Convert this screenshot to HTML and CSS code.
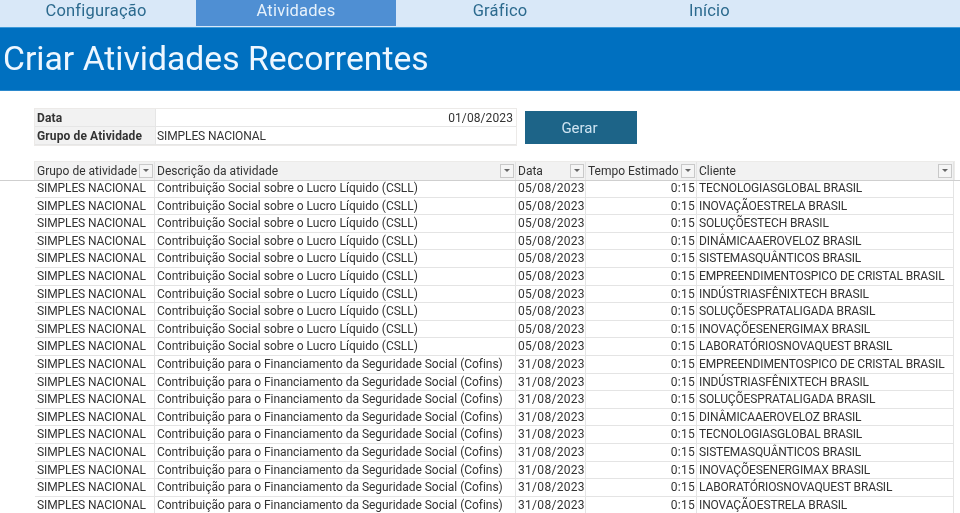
FILE: index.html
```html
<!DOCTYPE html>
<html lang="pt-BR">
<head>
<meta charset="utf-8">
<title>Criar Atividades Recorrentes</title>
<link rel="stylesheet" href="styles.css">
</head>
<body>
<nav class="tabs">
  <div class="tab">Configuração</div>
  <div class="tab active">Atividades</div>
  <div class="tab">Gráfico</div>
  <div class="tab">Início</div>
</nav>
<header class="banner"><h1>Criar Atividades Recorrentes</h1></header>
<section class="form-area">
  <div class="form">
    <div class="label">Data</div><div class="value right">01/08/2023</div>
    <div class="label">Grupo de Atividade</div><div class="value name">SIMPLES NACIONAL</div>
  </div>
  <button class="gerar">Gerar</button>
</section>
<section class="sheet">
  <div class="head row">
    <div class="hc">Grupo de atividade<span class="filter"></span></div>
    <div class="hc">Descrição da atividade<span class="filter"></span></div>
    <div class="hc">Data<span class="filter"></span></div>
    <div class="hc">Tempo Estimado<span class="filter"></span></div>
    <div class="hc">Cliente<span class="filter"></span></div>
  </div>
  <div class="row"><div class="c name">SIMPLES NACIONAL</div><div class="c">Contribuição Social sobre o Lucro Líquido (CSLL)</div><div class="c date">05/08/2023</div><div class="c time">0:15</div><div class="c client">TECNOLOGIASGLOBAL BRASIL</div></div>
  <div class="row"><div class="c name">SIMPLES NACIONAL</div><div class="c">Contribuição Social sobre o Lucro Líquido (CSLL)</div><div class="c date">05/08/2023</div><div class="c time">0:15</div><div class="c client">INOVAÇÃOESTRELA BRASIL</div></div>
  <div class="row"><div class="c name">SIMPLES NACIONAL</div><div class="c">Contribuição Social sobre o Lucro Líquido (CSLL)</div><div class="c date">05/08/2023</div><div class="c time">0:15</div><div class="c client">SOLUÇÕESTECH BRASIL</div></div>
  <div class="row"><div class="c name">SIMPLES NACIONAL</div><div class="c">Contribuição Social sobre o Lucro Líquido (CSLL)</div><div class="c date">05/08/2023</div><div class="c time">0:15</div><div class="c client">DINÂMICAAEROVELOZ BRASIL</div></div>
  <div class="row"><div class="c name">SIMPLES NACIONAL</div><div class="c">Contribuição Social sobre o Lucro Líquido (CSLL)</div><div class="c date">05/08/2023</div><div class="c time">0:15</div><div class="c client">SISTEMASQUÂNTICOS BRASIL</div></div>
  <div class="row"><div class="c name">SIMPLES NACIONAL</div><div class="c">Contribuição Social sobre o Lucro Líquido (CSLL)</div><div class="c date">05/08/2023</div><div class="c time">0:15</div><div class="c client">EMPREENDIMENTOSPICO DE CRISTAL BRASIL</div></div>
  <div class="row"><div class="c name">SIMPLES NACIONAL</div><div class="c">Contribuição Social sobre o Lucro Líquido (CSLL)</div><div class="c date">05/08/2023</div><div class="c time">0:15</div><div class="c client">INDÚSTRIASFÊNIXTECH BRASIL</div></div>
  <div class="row"><div class="c name">SIMPLES NACIONAL</div><div class="c">Contribuição Social sobre o Lucro Líquido (CSLL)</div><div class="c date">05/08/2023</div><div class="c time">0:15</div><div class="c client">SOLUÇÕESPRATALIGADA BRASIL</div></div>
  <div class="row"><div class="c name">SIMPLES NACIONAL</div><div class="c">Contribuição Social sobre o Lucro Líquido (CSLL)</div><div class="c date">05/08/2023</div><div class="c time">0:15</div><div class="c client">INOVAÇÕESENERGIMAX BRASIL</div></div>
  <div class="row"><div class="c name">SIMPLES NACIONAL</div><div class="c">Contribuição Social sobre o Lucro Líquido (CSLL)</div><div class="c date">05/08/2023</div><div class="c time">0:15</div><div class="c client">LABORATÓRIOSNOVAQUEST BRASIL</div></div>
  <div class="row"><div class="c name">SIMPLES NACIONAL</div><div class="c desc">Contribuição para o Financiamento da Seguridade Social (Cofins)</div><div class="c date">31/08/2023</div><div class="c time">0:15</div><div class="c client">EMPREENDIMENTOSPICO DE CRISTAL BRASIL</div></div>
  <div class="row"><div class="c name">SIMPLES NACIONAL</div><div class="c desc">Contribuição para o Financiamento da Seguridade Social (Cofins)</div><div class="c date">31/08/2023</div><div class="c time">0:15</div><div class="c client">INDÚSTRIASFÊNIXTECH BRASIL</div></div>
  <div class="row"><div class="c name">SIMPLES NACIONAL</div><div class="c desc">Contribuição para o Financiamento da Seguridade Social (Cofins)</div><div class="c date">31/08/2023</div><div class="c time">0:15</div><div class="c client">SOLUÇÕESPRATALIGADA BRASIL</div></div>
  <div class="row"><div class="c name">SIMPLES NACIONAL</div><div class="c desc">Contribuição para o Financiamento da Seguridade Social (Cofins)</div><div class="c date">31/08/2023</div><div class="c time">0:15</div><div class="c client">DINÂMICAAEROVELOZ BRASIL</div></div>
  <div class="row"><div class="c name">SIMPLES NACIONAL</div><div class="c desc">Contribuição para o Financiamento da Seguridade Social (Cofins)</div><div class="c date">31/08/2023</div><div class="c time">0:15</div><div class="c client">TECNOLOGIASGLOBAL BRASIL</div></div>
  <div class="row"><div class="c name">SIMPLES NACIONAL</div><div class="c desc">Contribuição para o Financiamento da Seguridade Social (Cofins)</div><div class="c date">31/08/2023</div><div class="c time">0:15</div><div class="c client">SISTEMASQUÂNTICOS BRASIL</div></div>
  <div class="row"><div class="c name">SIMPLES NACIONAL</div><div class="c desc">Contribuição para o Financiamento da Seguridade Social (Cofins)</div><div class="c date">31/08/2023</div><div class="c time">0:15</div><div class="c client">INOVAÇÕESENERGIMAX BRASIL</div></div>
  <div class="row"><div class="c name">SIMPLES NACIONAL</div><div class="c desc">Contribuição para o Financiamento da Seguridade Social (Cofins)</div><div class="c date">31/08/2023</div><div class="c time">0:15</div><div class="c client">LABORATÓRIOSNOVAQUEST BRASIL</div></div>
  <div class="row"><div class="c name">SIMPLES NACIONAL</div><div class="c desc">Contribuição para o Financiamento da Seguridade Social (Cofins)</div><div class="c date">31/08/2023</div><div class="c time">0:15</div><div class="c client">INOVAÇÃOESTRELA BRASIL</div></div>
</section>
</body>
</html>
```
FILE: styles.css
```css
* { box-sizing: border-box; }
html, body { margin: 0; padding: 0; height: 513px; overflow: hidden; background: #fff; }
body { font-family: Roboto, "Liberation Sans", sans-serif; color: #333; filter: blur(0.35px); }

.tabs { display: grid; grid-template-columns: 196px 200px 208px 356px; height: 27px; background: #d9e8f8; }
.tab { display: flex; align-items: center; justify-content: center; font-size: 16.5px; color: #2c6a8e; letter-spacing: 0.2px; padding-bottom: 6px; }
.tab:nth-child(1) { padding-right: 4px; }
.tab:nth-child(4) { justify-content: flex-start; padding-left: 85px; }
.tab.active { background: #4f8fd3; color: #e6f1fb; border-bottom: 1px solid #d9e8f8; }

.banner { height: 64px; background: #0070c0; display: flex; align-items: center; padding-left: 3px; border-top: 1px solid #3f9ad8; border-bottom: 1px solid #2b88cc; }
.banner h1 { margin: 0; font-size: 33.7px; font-weight: 400; color: #eef7ff; padding-bottom: 2px; }

.form-area { display: flex; align-items: flex-start; height: 71px; padding: 18px 0 0 35px; }
.form { display: grid; grid-template-columns: 120px 361px; grid-auto-rows: 18px; font-size: 12px; box-shadow: 0 0 0 1px #eceae8; }
.label { background: #f2f2f2; font-weight: 700; padding-left: 2px; line-height: 18px; border-bottom: 1px solid #e6e6e6; letter-spacing: 0.12px; }
.value { padding: 0 3px 0 1px; line-height: 18px; border-left: 1px solid #e6e6e6; border-bottom: 1px solid #e6e6e6; }
.right { text-align: right; letter-spacing: 0.1px; }
.gerar { width: 112px; height: 33px; margin: 2px 0 0 9px; padding: 0 3px 0 0; border: 0; background: #1d6488; color: #cfe4f2; font: 400 15px Roboto, sans-serif; }

.sheet { display: flex; flex-direction: column; }
.row { display: grid; grid-template-columns: 120px 361px 70px 111px 257px; height: 17.6px; margin-left: 35px; width: 919px; font-size: 12px; line-height: 17px; }
.c { padding: 0 2px; white-space: nowrap; border-right: 1px solid #e4e4e4; border-bottom: 1px solid #e4e4e4; overflow: hidden; }
.name { letter-spacing: -0.1px; }
.desc { letter-spacing: -0.03px; }
.client { letter-spacing: -0.13px; }
.date { padding-left: 2px; letter-spacing: 0.3px; }
.time { text-align: right; padding-right: 1px; letter-spacing: 0.3px; }
.head { position: relative; height: 18px; background: #f2f2f2; box-shadow: 0 0 0 1px #ecebe9; }
.head::after { content: ""; position: absolute; left: -35px; width: 960px; bottom: -1px; height: 1px; background: #cfcfcf; }
.hc { display: flex; align-items: center; justify-content: space-between; padding: 0 1px 0 2px; white-space: nowrap; border-right: 1px solid #e4e4e4; }
.filter { position: relative; width: 14px; height: 14px; flex: none; background: #f5f5f5; border: 1px solid #c9c9c9; }
.filter::after { content: ""; position: absolute; left: 3px; top: 4px; border: 3px solid transparent; border-top: 3px solid #666; border-bottom: 0; }
```
